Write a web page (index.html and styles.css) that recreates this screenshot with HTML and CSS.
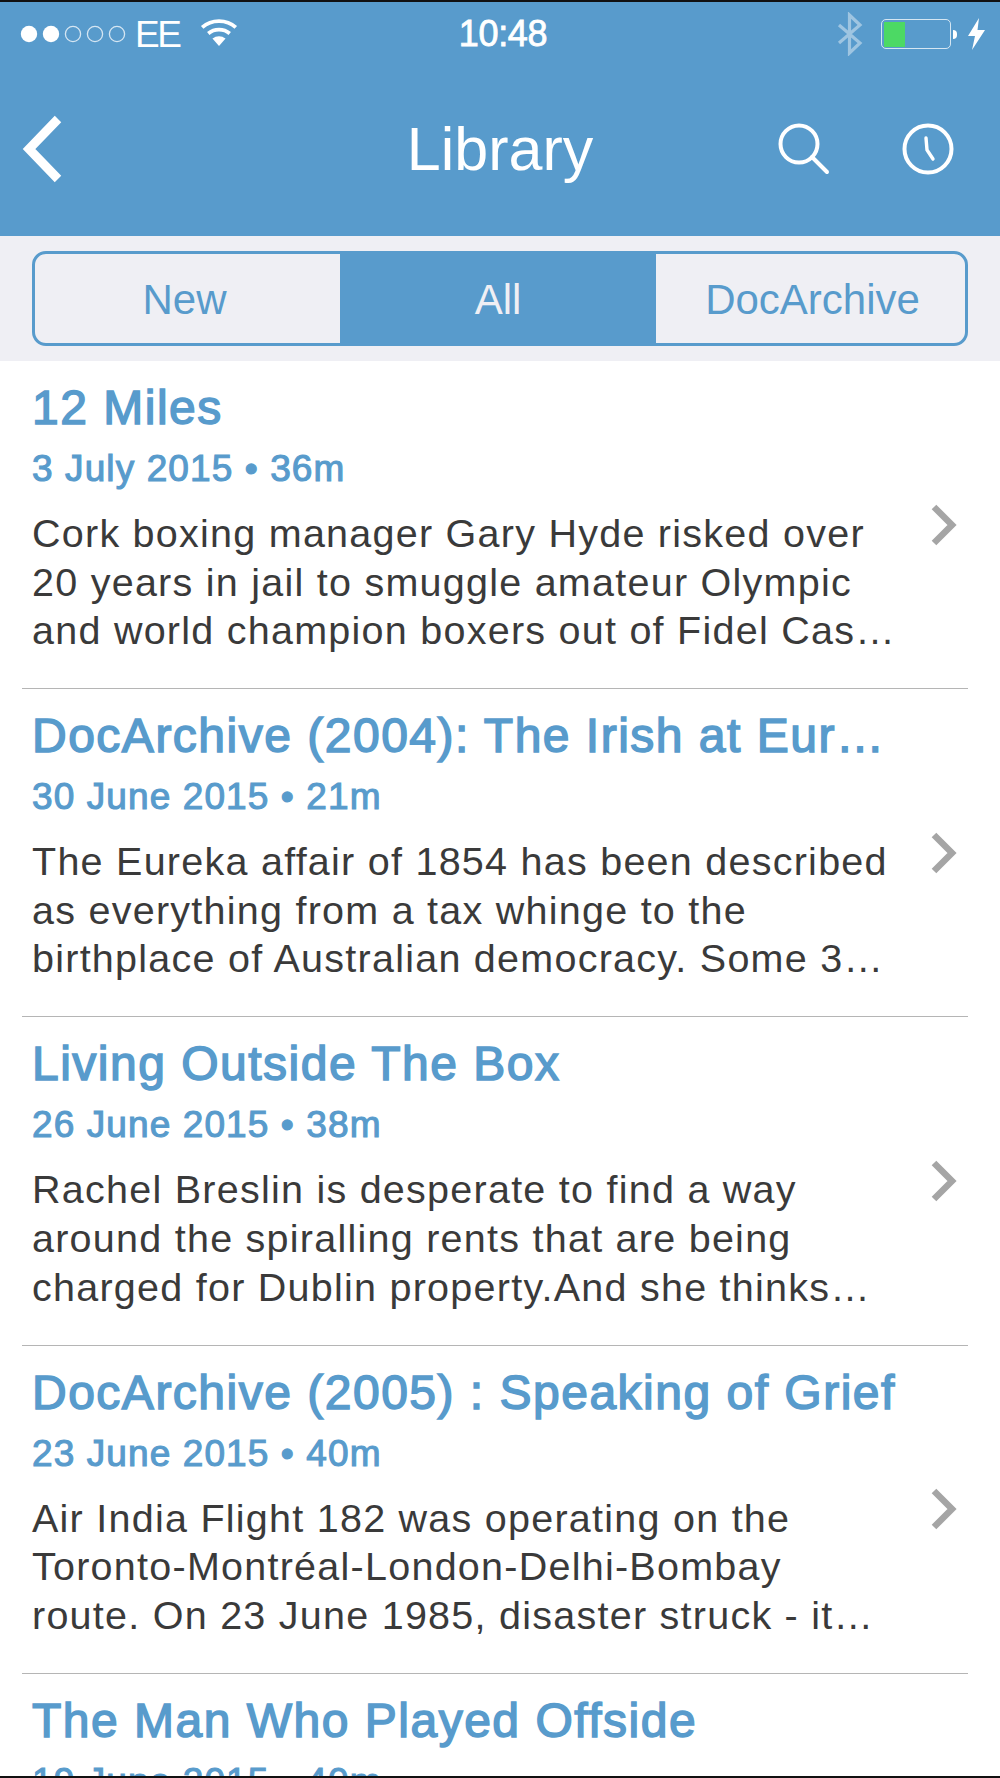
FILE: index.html
```html
<!DOCTYPE html>
<html lang="en">
<head>
<meta charset="utf-8">
<title>Library</title>
<link rel="stylesheet" href="styles.css">
</head>
<body>
<div class="screen">
  <header class="header">
    <div class="status">
      <div class="status-left">
        <svg class="signal" width="110" height="20" viewBox="0 0 110 20"><circle cx="9" cy="10" r="8.2" fill="#fff"/><circle cx="31" cy="10" r="8.2" fill="#fff"/><circle cx="53" cy="10" r="7.6" fill="none" stroke="#fff" stroke-opacity=".75" stroke-width="1.3"/><circle cx="75" cy="10" r="7.6" fill="none" stroke="#fff" stroke-opacity=".75" stroke-width="1.3"/><circle cx="97" cy="10" r="7.6" fill="none" stroke="#fff" stroke-opacity=".75" stroke-width="1.3"/></svg>
        <span class="carrier">EE</span>
        <svg class="wifi" width="38" height="28" viewBox="0 0 40 30"><path d="M2 9 C12 0 28 0 38 9" fill="none" stroke="#fff" stroke-width="4"/><path d="M8.500 15.500 C15 10 25 10 31.500 15.500" fill="none" stroke="#fff" stroke-width="4"/><path d="M13 21 L20 29 L27 21 C23 17.500 17 17.500 13 21Z" fill="#fff"/></svg>
      </div>
      <div class="time">10:48</div>
      <div class="status-right">
        <svg class="bt" width="26" height="44" viewBox="0 0 26 44"><path d="M2 13 L23 31 L12.500 41 V3 L23 13 L2 31" fill="none" stroke="#fff" stroke-opacity=".42" stroke-width="3.200"/></svg>
        <div class="battery"><div class="battery-fill"></div></div>
        <div class="nub"></div>
        <svg class="bolt" width="18" height="32" viewBox="0 0 18 32"><path d="M11 0 L0 18 H7 L4 32 L17 12 H9.500Z" fill="#fff"/></svg>
      </div>
    </div>
    <nav class="nav">
      <svg class="back" width="44" height="72" viewBox="0 0 44 72"><path d="M37 6 L8 36 L37 66" fill="none" stroke="#fff" stroke-width="9"/></svg>
      <h1 class="title">Library</h1>
      <div class="nav-actions">
        <svg class="search" width="52" height="52" viewBox="0 0 52 52"><circle cx="21" cy="21" r="18.500" fill="none" stroke="#fff" stroke-width="4"/><path d="M34 34 L49 49" fill="none" stroke="#fff" stroke-width="4" stroke-linecap="round"/></svg>
        <svg class="clock" width="52" height="52" viewBox="0 0 52 52"><circle cx="26" cy="26" r="23.500" fill="none" stroke="#fff" stroke-width="4"/><path d="M24 15 L25 27 L31 36" fill="none" stroke="#fff" stroke-width="3.400" stroke-linecap="round"/></svg>
      </div>
    </nav>
  </header>

  <div class="tabs-wrap">
    <div class="tabs">
      <div class="tab tab-new">New</div>
      <div class="tab active">All</div>
      <div class="tab tab-doc">DocArchive</div>
    </div>
  </div>

  <main class="list">
    <article class="row">
      <div class="row-body">
        <h2 class="row-title">12 Miles</h2>
        <div class="meta">3 July 2015 • 36m</div>
        <p class="desc"><span>Cork boxing manager Gary Hyde risked over</span><span>20 years in jail to smuggle amateur Olympic</span><span>and world champion boxers out of Fidel Cas…</span></p>
      </div>
      <svg class="chev" width="26" height="42" viewBox="0 0 26 42"><path d="M3 3 L21 21 L3 39" fill="none" stroke="#a5a5a5" stroke-width="6.500"/></svg>
    </article>
    <article class="row">
      <div class="row-body">
        <h2 class="row-title">DocArchive (2004): The Irish at Eur…</h2>
        <div class="meta">30 June 2015 • 21m</div>
        <p class="desc"><span>The Eureka affair of 1854 has been described</span><span>as everything from a tax whinge to the</span><span>birthplace of Australian democracy. Some 3…</span></p>
      </div>
      <svg class="chev" width="26" height="42" viewBox="0 0 26 42"><path d="M3 3 L21 21 L3 39" fill="none" stroke="#a5a5a5" stroke-width="6.500"/></svg>
    </article>
    <article class="row">
      <div class="row-body">
        <h2 class="row-title">Living Outside The Box</h2>
        <div class="meta">26 June 2015 • 38m</div>
        <p class="desc"><span>Rachel Breslin is desperate to find a way</span><span>around the spiralling rents that are being</span><span>charged for Dublin property.And she thinks…</span></p>
      </div>
      <svg class="chev" width="26" height="42" viewBox="0 0 26 42"><path d="M3 3 L21 21 L3 39" fill="none" stroke="#a5a5a5" stroke-width="6.500"/></svg>
    </article>
    <article class="row">
      <div class="row-body">
        <h2 class="row-title">DocArchive (2005) : Speaking of Grief</h2>
        <div class="meta">23 June 2015 • 40m</div>
        <p class="desc"><span>Air India Flight 182 was operating on the</span><span>Toronto-Montréal-London-Delhi-Bombay</span><span>route. On 23 June 1985, disaster struck - it…</span></p>
      </div>
      <svg class="chev" width="26" height="42" viewBox="0 0 26 42"><path d="M3 3 L21 21 L3 39" fill="none" stroke="#a5a5a5" stroke-width="6.500"/></svg>
    </article>
    <article class="row">
      <div class="row-body">
        <h2 class="row-title">The Man Who Played Offside</h2>
        <div class="meta">19 June 2015 • 40m</div>
      </div>
    </article>
  </main>
</div>
</body>
</html>
```
FILE: styles.css
```css
* { box-sizing: border-box; }
html, body { margin: 0; padding: 0; background: #fff; }
.screen {
  width: 1000px;
  height: 1778px;
  overflow: hidden;
  border-top: 2px solid #111;
  border-bottom: 2px solid #111;
  font-family: "Liberation Sans", Arial, sans-serif;
  color: #3a3a3a;
  background: #fff;
}
.header { height: 234px; background: #589bcc; color: #fff; display: flex; flex-direction: column; }
.status { height: 64px; display: grid; grid-template-columns: 1fr auto 1fr; align-items: center; padding: 0 14px 0 20px; }
.status-left { display: flex; align-items: center; }
.signal { flex: none; }
.carrier { font-size: 37px; letter-spacing: -2.500px; margin-left: 5px; line-height: 1; }
.wifi { margin-left: 21px; margin-top: -2px; }
.time { font-size: 36px; letter-spacing: -.3px; -webkit-text-stroke: .8px #fff; line-height: 1; }
.status-right { display: flex; align-items: center; justify-content: flex-end; }
.bt { margin-right: 18px; }
.battery { width: 70px; height: 30px; border: 1.500px solid rgba(255,255,255,.75); border-radius: 5px; padding: 1.500px; }
.battery-fill { width: 21px; height: 100%; background: #4cd964; }
.nub { width: 4px; height: 9px; margin-left: 2px; margin-right: 11px; background: #fff; border-radius: 0 5px 5px 0; }
.nav { flex: 1; display: grid; grid-template-columns: 1fr auto 1fr; align-items: center; }
.back { margin-top: -4px; margin-left: 21px; }
.title { margin: 0 0 4px; font-weight: 400; font-size: 61px; line-height: 72px; }
.nav-actions { display: flex; justify-content: flex-end; gap: 72px; padding-right: 46px; margin-top: -4px; }
.tabs-wrap { height: 125px; background: #efeff4; padding: 15px 32px 0; }
.tabs { height: 95px; display: grid; grid-template-columns: 305px 316px 1fr; border: 3px solid #589bcc; border-radius: 14px; overflow: hidden; }
.tab { display: flex; align-items: center; justify-content: center; font-size: 42px; padding-top: 2px; color: #589bcc; }
.tab-new { padding-right: 6px; }
.tab-doc { padding-left: 4px; }
.active { background: #589bcc; color: #efeff4; }
.list { display: flex; flex-direction: column; }
.row { height: 328.200px; margin: 0 32px 0 22px; padding-left: 10px; border-bottom: 1.500px solid #b5b5b5; display: flex; align-items: center; gap: 10px; }
.row:last-child { border-bottom: 0; }
.row-body { flex: 1; min-width: 0; align-self: flex-start; }
.row-title { margin: 16px 0 0; font-size: 48px; line-height: 62px; color: #589bcc; font-weight: 400; -webkit-text-stroke: 1.500px #589bcc; letter-spacing: 1.500px; white-space: nowrap; }
.meta { margin-top: 8px; font-size: 37px; line-height: 44px; color: #589bcc; -webkit-text-stroke: 1.100px #589bcc; letter-spacing: 1.100px; }
.desc { margin: 18px 0 0; font-size: 39.500px; line-height: 48.600px; letter-spacing: 1.250px; }
.desc span { display: block; white-space: nowrap; }
.chev { flex: none; margin-right: 11px; }
```
